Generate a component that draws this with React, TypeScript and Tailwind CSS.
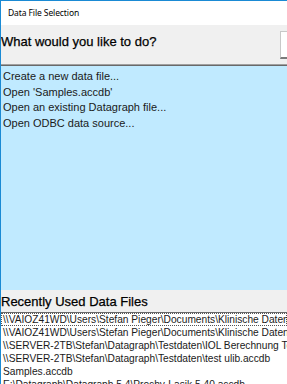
const recentFiles = [
  "\\\\VAIOZ41WD\\Users\\Stefan Pieger\\Documents\\Klinische Daten\\Vergleich.accdb",
  "\\\\VAIOZ41WD\\Users\\Stefan Pieger\\Documents\\Klinische Daten\\Vergleich 2.accdb",
  "\\\\SERVER-2TB\\Stefan\\Datagraph\\Testdaten\\IOL Berechnung Test.accdb",
  "\\\\SERVER-2TB\\Stefan\\Datagraph\\Testdaten\\test ulib.accdb",
  "Samples.accdb",
  "E:\\Datagraph\\Datagraph 5.4\\Prochy-Lasik 5.40.accdb",
];

const actions = [
  "Create a new data file...",
  "Open 'Samples.accdb'",
  "Open an existing Datagraph file...",
  "Open ODBC data source...",
];

export default function App() {
  return (
    <div
      className="w-[287px] h-[384px] overflow-hidden flex flex-col bg-[#f0f0f0] border-l border-t border-[#1a8ad4] text-black"
      style={{ fontFamily: '"Liberation Sans", Arial, sans-serif' }}
    >
      {/* title bar */}
      <div className="h-[24px] shrink-0 bg-white flex items-center pl-[7px]">
        <span
          className="text-[8.5px] tracking-[-0.1px]"
          style={{ fontFamily: '"Noto Sans", sans-serif' }}
        >
          Data File Selection
        </span>
      </div>

      {/* header row */}
      <div className="h-[39px] shrink-0 flex items-start">
        <h1 className="flex-1 text-[13px] leading-[15px] pt-[9px] font-normal [-webkit-text-stroke:0.25px_black]">
          What would you like to do?
        </h1>
        <div className="w-[7px] h-[28px] mt-[6px] shrink-0 border-l border-t border-b-2 border-l-[#c8c8c8] border-t-[#c8c8c8] border-b-[#7a7a7a] bg-white" />
      </div>

      {/* action list */}
      <div className="h-[226px] shrink-0 border-t border-[#a0a0a0]">
        <div className="h-full border-t border-[#696969] bg-[#c0eaff] pt-[3px] pl-[2px]">
          {actions.map((a) => (
            <div key={a} className="text-[11px] leading-[15.6px] text-[#1a1a1a]">
              {a}
            </div>
          ))}
        </div>
      </div>

      {/* recent header */}
      <div className="h-[22px] shrink-0 flex items-center">
        <h2 className="text-[13px] leading-[15px] font-normal [-webkit-text-stroke:0.25px_black]">
          Recently Used Data Files
        </h2>
      </div>

      {/* recent list */}
      <div className="flex-1 bg-white border-t border-[#696969] overflow-hidden">
        {recentFiles.map((f, i) => (
          <div
            key={f}
            className={
              "whitespace-nowrap text-[10.2px] leading-[11px] pl-[1px] text-[#1a1a1a] border " +
              (i === 0 ? "border-dotted border-[#555]" : "border-transparent")
            }
          >
            {f}
          </div>
        ))}
      </div>
    </div>
  );
}
